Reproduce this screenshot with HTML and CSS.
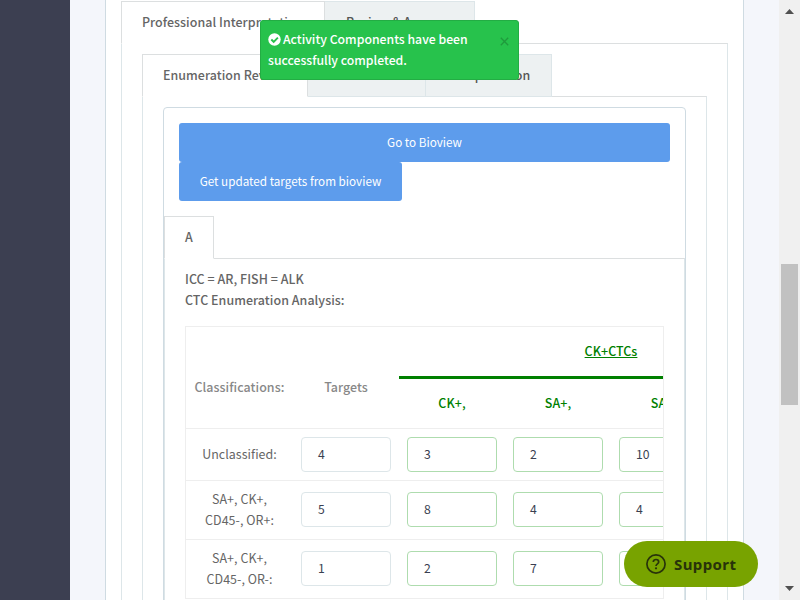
FILE: index.html
```html
<!DOCTYPE html>
<html lang="en">
<head>
<meta charset="utf-8">
<title>Enumeration Review</title>
<link rel="stylesheet" href="styles.css">
</head>
<body>
<div class="app">
  <aside class="sidebar"></aside>
  <main class="main">
    <section class="card">
      <nav class="tabs">
        <a class="tab active tab-prof">Professional Interpretation</a>
        <a class="tab tab-approve">Review &amp; Approve</a>
      </nav>
      <div class="tab-body">
        <nav class="tabs">
          <a class="tab active tab-enum">Enumeration Review</a>
          <a class="tab tab-fish">FISH Review</a>
          <a class="tab tab-interp">Interpretation</a>
        </nav>
        <div class="tab-body inner">
          <div class="panel">
            <div class="actions">
              <button class="btn wide">Go to Bioview</button>
              <button class="btn narrow">Get updated targets from bioview</button>
            </div>
            <nav class="tabs"><a class="tab active tab-a">A</a></nav>
            <div class="tab-body analysis">
              <p class="lead">ICC = AR, FISH = ALK</p>
              <p class="lead">CTC Enumeration Analysis:</p>
              <div class="table">
                <div class="head">
                  <div class="th span">Classifications:</div>
                  <div class="th span">Targets</div>
                  <div class="th group"><u>CK+CTCs</u></div>
                  <div class="th green">CK+,</div>
                  <div class="th green">SA+,</div>
                  <div class="th green">SA+,</div>
                </div>
                <div class="row short">
                  <div class="label">Unclassified:</div>
                  <div class="cell"><span class="input">4</span></div>
                  <div class="cell"><span class="input ok">3</span></div>
                  <div class="cell"><span class="input ok">2</span></div>
                  <div class="cell"><span class="input ok">10</span></div>
                </div>
                <div class="row">
                  <div class="label">SA+, CK+,<br>CD45-, OR+:</div>
                  <div class="cell"><span class="input">5</span></div>
                  <div class="cell"><span class="input ok">8</span></div>
                  <div class="cell"><span class="input ok">4</span></div>
                  <div class="cell"><span class="input ok">4</span></div>
                </div>
                <div class="row">
                  <div class="label">SA+, CK+,<br>CD45-, OR-:</div>
                  <div class="cell"><span class="input">1</span></div>
                  <div class="cell"><span class="input ok">2</span></div>
                  <div class="cell"><span class="input ok">7</span></div>
                  <div class="cell"><span class="input ok"></span></div>
                </div>
              </div>
            </div>
          </div>
        </div>
      </div>
    </section>
  </main>
  <div class="scrollbar">
    <svg width="9" height="5" viewBox="0 0 9 5"><path d="M0 5L4.5 0L9 5z" fill="#505050"/></svg>
    <div class="thumb"></div>
    <svg class="down" width="9" height="5" viewBox="0 0 9 5"><path d="M0 0L4.5 5L9 0z" fill="#505050"/></svg>
  </div>
</div>

<div class="toast">
  <p><svg class="check" width="13" height="13" viewBox="0 0 13 13"><circle cx="6.5" cy="6.5" r="6.2" fill="#fff"/><path d="M3.3 6.5L5.7 8.8L9.9 4.6" fill="none" stroke="#27c24c" stroke-width="1.9"/></svg>Activity Components have been<br>successfully completed.</p>
  <svg class="close" width="9" height="9" viewBox="0 0 9 9"><path d="M.8.8L8.2 8.2M8.2.8L.8 8.2" stroke="#1f9a3c" stroke-width="1.3"/></svg>
</div>

<div class="support">
  <svg width="20" height="20" viewBox="0 0 20 20"><circle cx="10" cy="10" r="9.1" fill="none" stroke="#28330a" stroke-width="1.7"/><path d="M7.3 8.1C7.3 6.5 8.5 5.5 10 5.5S12.7 6.5 12.7 7.9C12.7 9.8 10 9.9 10 12" fill="none" stroke="#28330a" stroke-width="1.7"/><circle cx="10" cy="14.3" r="1.1" fill="#28330a"/></svg>
  <span>Support</span>
</div>
</body>
</html>
```
FILE: styles.css
```css
* { box-sizing: border-box; }
body {
  margin: 0;
  height: 600px;
  overflow: hidden;
  background: #f5f7fa;
  color: #656565;
  font-family: "Noto Sans CJK SC", "Open Sans", sans-serif;
  font-size: 12.45px;
  letter-spacing: .05px;
  line-height: 21px;
}
p { margin: 0; }
.app { display: flex; height: 600px; }
.sidebar { width: 70px; background: #3c3f51; }
.main { flex: 1; padding: 0 35px; background: #f4f6fb; }
.card {
  height: 600px;
  overflow: hidden;
  padding: 1px 15px 0;
  background: #fff;
  border: solid #cfdbe2;
  border-width: 0 1px;
}
.tabs { display: flex; height: 43px; margin-bottom: -1px; position: relative; }
.tab {
  height: 43px;
  padding: 10px 20px;
  white-space: nowrap;
  font-weight: 500;
  color: #555;
  background: #edf1f2;
  border: 1px solid #dde6e9;
  border-left-width: 0;
}
.tab.active {
  background: #fff;
  color: #656565;
  border: 1px solid #dcdfe0;
  border-bottom-color: #fff;
}
.tab-prof { width: 204px; }
.tab-approve { width: 150px; padding-left: 21px; }
.tab-enum { width: 166px; }
.tab-fish { width: 118px; }
.tab-interp { width: 126px; }
.tab-a { width: 50px; }
.tab-body {
  height: 700px;
  padding: 10px 20px;
  border: 1px solid #dde6e9;
  border-top-color: #dcdfe0;
}
.panel {
  height: 700px;
  border: 1px solid #cfdbe2;
  border-radius: 4px;
}
.actions { padding: 15px; height: 108px; display: flex; flex-direction: column; align-items: flex-start; }
.btn {
  height: 39px;
  padding: 0 0 2px;
  border: 0;
  border-radius: 3px;
  background: #5d9cec;
  color: #fff;
  font: inherit;
  font-size: 11.7px;
  letter-spacing: 0;
}
.wide { width: 100%; }
.narrow { width: 223px; }
.lead { font-weight: 500; }
.table {
  margin-top: 15px;
  width: 479px;
  overflow: hidden;
  border: 1px solid #eee;
}
.head {
  display: grid;
  grid-template-columns: 107px repeat(5, 106px);
  grid-template-rows: 52px 49px;
  font-weight: 500;
}
.th { display: flex; align-items: center; justify-content: center; color: #888; }
.span { grid-row: span 2; padding-top: 20px; }
.group { grid-column: span 4; border-bottom: 3px solid #008000; color: #008000; }
.green { color: #008000; }
.row {
  display: grid;
  grid-template-columns: 107px repeat(5, 106px);
  height: 59px;
  padding-top: 8px;
  border-top: 1px solid #eee;
}
.row .cell { padding-top: 3px; }
.row.short { height: 52px; }
.row.short .cell { padding-top: 0; }
.row.short .label { padding-top: 7px; }
.label { text-align: center; }
.input {
  display: block;
  width: 90px;
  height: 35px;
  margin-left: 8px;
  padding: 6px 16px;
  border: 1px solid #dde6e9;
  border-radius: 4px;
  color: #3a3f51;
  font-size: 12.2px;
}
.input.ok { border-color: #aedcae; }
.scrollbar {
  width: 21px;
  padding: 9px 2px 9px;
  display: flex;
  flex-direction: column;
  align-items: center;
  background: #f0f0f0;
}
.thumb { width: 17px; height: 141px; margin-top: 250px; background: #c1c1c1; }
.down { margin-top: auto; }
.toast {
  position: absolute;
  left: 260px;
  top: 20px;
  width: 259px;
  height: 60px;
  padding: 8px 7px;
  background: #27c24c;
  border: 1px solid #23ad44;
  border-radius: 3px;
  color: #fff;
  font-size: 12.25px;
  letter-spacing: 0;
  font-weight: 500;
}
.check { margin-right: 2px; vertical-align: -2px; }
.close { position: absolute; right: 9px; top: 16px; }
.support {
  position: absolute;
  left: 624px;
  top: 541px;
  width: 134px;
  height: 46px;
  padding-left: 22px;
  display: flex;
  align-items: center;
  gap: 8px;
  border-radius: 23px;
  background: #78a300;
  color: #28330a;
  font: bold 15px "Noto Sans", sans-serif;
  letter-spacing: .4px;
}
```
